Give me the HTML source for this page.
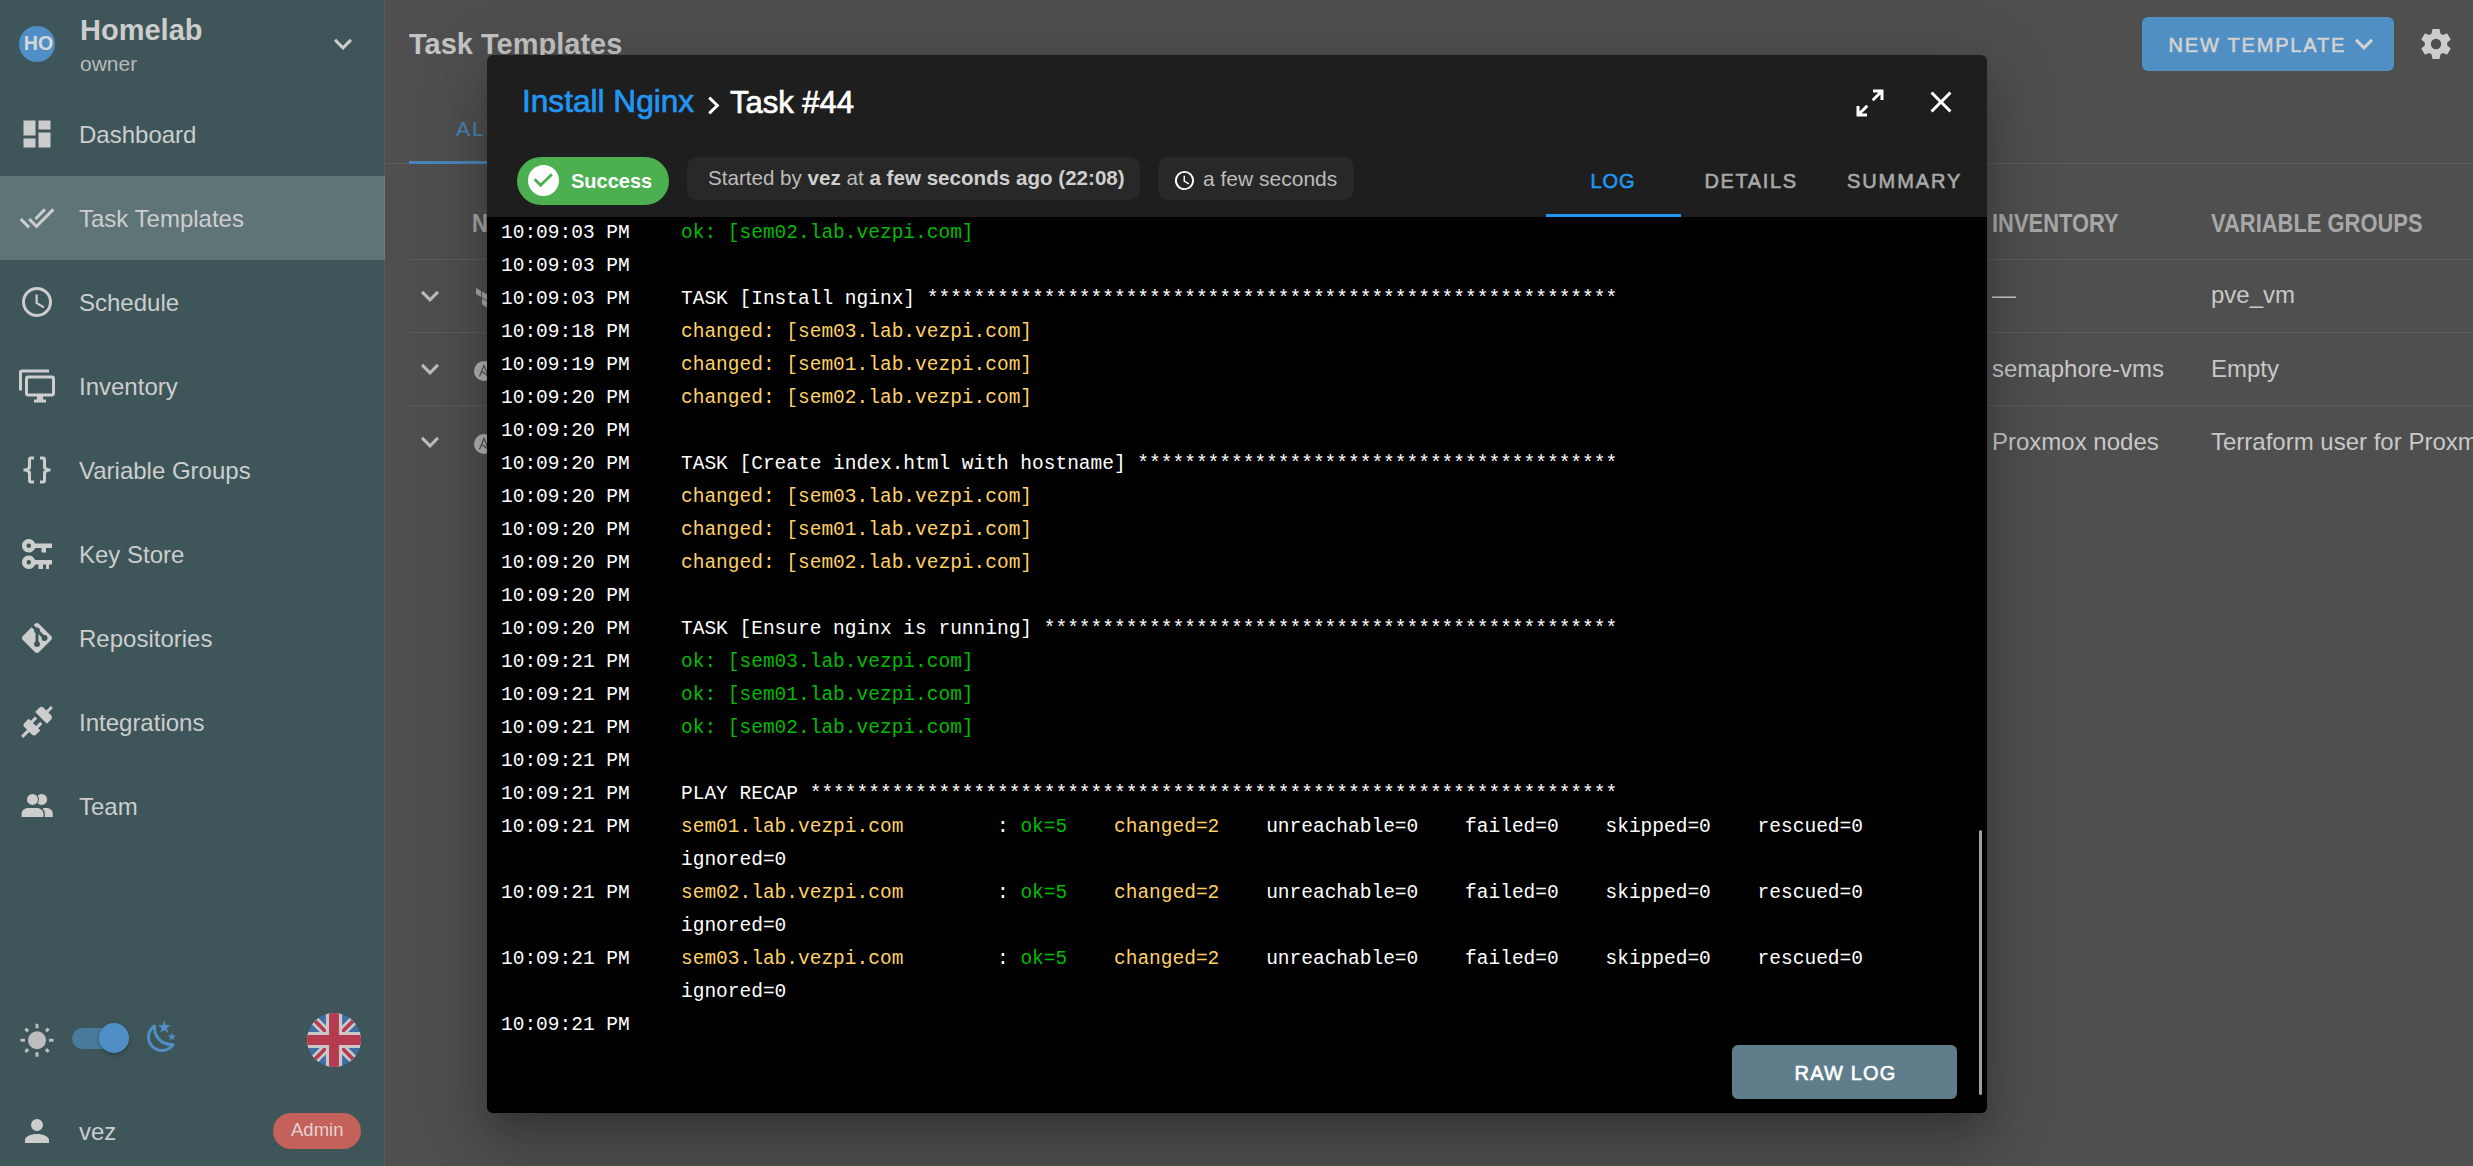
<!DOCTYPE html><html><head><meta charset="utf-8"><style>
html,body{margin:0;padding:0;width:2473px;height:1166px;overflow:hidden;background:#4f4f4f;font-family:"Liberation Sans",sans-serif;}
.t{position:absolute;white-space:pre;line-height:1;}
.i{position:absolute;display:block;}
.b{position:absolute;}
#side{position:absolute;left:0;top:0;width:385px;height:1166px;background:#3e5659;}
#dlg{position:absolute;left:487px;top:55px;width:1500px;height:1058px;background:#1e1e1e;border-radius:6px;overflow:hidden;
 box-shadow:0 16px 22px -10px rgba(0,0,0,.2),0 36px 57px 4px rgba(0,0,0,.14),0 13px 69px 12px rgba(0,0,0,.12);}
#log{position:absolute;left:0;top:162px;width:1500px;height:896px;background:#000;font-family:"Liberation Mono",monospace;font-size:19.5px;line-height:33px;color:#fff;}
.ln{position:absolute;left:14px;height:33px;white-space:pre;}
.ln .tm{position:absolute;left:0;top:0;}
.ln .ms{position:absolute;left:180px;top:0;}
.g{color:#00bb00}.y{color:#ffd166}
</style></head><body>
<div id="side">
<div class="b" style="left:19px;top:26px;width:36px;height:36px;border-radius:50%;background:#4f8fc5;"></div>
<div class="t" style="left:23.8px;top:34.41px;font-size:19.6px;color:#d8d8d8;font-weight:700;">HO</div>
<div class="t" style="left:80px;top:16.25px;font-size:29px;color:#cdcdcd;font-weight:700;">Homelab</div>
<div class="t" style="left:80px;top:53.22px;font-size:21px;color:#b9b9b9;">owner</div>
<svg class="i" style="left:325px;top:26px;width:36px;height:36px;" viewBox="0 0 24 24"><path fill="#cdcdcd" d="M7.41,8.58L12,13.17L16.59,8.58L18,10L12,16L6,10L7.41,8.58Z"/></svg>
<div class="b" style="left:0;top:176px;width:385px;height:84px;background:#5f7476;"></div>
<svg class="i" style="left:19px;top:116px;width:36px;height:36px;" viewBox="0 0 24 24"><path fill="#cdcdcd" d="M13,3V9H21V3M13,21H21V11H13M3,21H11V15H3M3,13H11V3H3V13Z"/></svg>
<div class="t" style="left:79px;top:122.68px;font-size:24px;color:#cdcdcd;">Dashboard</div>
<svg class="i" style="left:19px;top:200px;width:36px;height:36px;" viewBox="0 0 24 24"><path fill="#cdcdcd" d="M0.41,13.41L6,19L7.41,17.58L1.83,12M22.24,5.58L11.66,16.17L7.5,12L6.07,13.41L11.66,19L23.66,7M18,7L16.59,5.58L10.24,11.93L11.66,13.34L18,7Z"/></svg>
<div class="t" style="left:79px;top:206.68px;font-size:24px;color:#cdcdcd;">Task Templates</div>
<svg class="i" style="left:19px;top:284px;width:36px;height:36px;" viewBox="0 0 24 24"><path fill="#cdcdcd" d="M12,20A8,8 0 0,0 20,12A8,8 0 0,0 12,4A8,8 0 0,0 4,12A8,8 0 0,0 12,20M12,2A10,10 0 0,1 22,12A10,10 0 0,1 12,22C6.47,22 2,17.5 2,12A10,10 0 0,1 12,2M12.5,7V12.25L17,14.92L16.25,16.15L11,13V7H12.5Z"/></svg>
<div class="t" style="left:79px;top:290.68px;font-size:24px;color:#cdcdcd;">Schedule</div>
<svg class="i" style="left:19px;top:368px;width:36px;height:36px;" viewBox="0 0 24 24"><path fill="#cdcdcd" d="M22,17V7H6V17H22M22,5A2,2 0 0,1 24,7V17C24,18.11 23.1,19 22,19H16V21H18V23H10V21H12V19H6C4.89,19 4,18.11 4,17V7A2,2 0 0,1 6,5H22M2,3V15H0V3A2,2 0 0,1 2,1H20V3H2Z"/></svg>
<div class="t" style="left:79px;top:374.68px;font-size:24px;color:#cdcdcd;">Inventory</div>
<svg class="i" style="left:19px;top:452px;width:36px;height:36px;" viewBox="0 0 24 24"><path fill="#cdcdcd" d="M8,3A2,2 0 0,0 6,5V9A2,2 0 0,1 4,11H3V13H4A2,2 0 0,1 6,15V19A2,2 0 0,0 8,21H10V19H8V14A2,2 0 0,0 6,12A2,2 0 0,0 8,10V5H10V3M16,3A2,2 0 0,1 18,5V9A2,2 0 0,0 20,11H21V13H20A2,2 0 0,0 18,15V19A2,2 0 0,1 16,21H14V19H16V14A2,2 0 0,1 18,12A2,2 0 0,1 16,10V5H14V3H16Z"/></svg>
<div class="t" style="left:79px;top:458.68px;font-size:24px;color:#cdcdcd;">Variable Groups</div>
<svg class="i" style="left:19px;top:536px;width:36px;height:36px;" viewBox="0 0 24 24"><path fill="#cdcdcd" d="M6.5,2C8.46,2 10.13,3.25 10.74,5H22V8H18V11H15V8H10.74C10.13,9.75 8.46,11 6.5,11C4,11 2,9 2,6.5C2,4 4,2 6.5,2M6.5,5A1.5,1.5 0 0,0 5,6.5A1.5,1.5 0 0,0 6.5,8A1.5,1.5 0 0,0 8,6.5A1.5,1.5 0 0,0 6.5,5M6.5,13C8.46,13 10.13,14.25 10.74,16H22V19H20V22H18V19H16V22H13V19H10.74C10.13,20.75 8.46,22 6.5,22C4,22 2,20 2,17.5C2,15 4,13 6.5,13M6.5,16A1.5,1.5 0 0,0 5,17.5A1.5,1.5 0 0,0 6.5,19A1.5,1.5 0 0,0 8,17.5A1.5,1.5 0 0,0 6.5,16Z"/></svg>
<div class="t" style="left:79px;top:542.68px;font-size:24px;color:#cdcdcd;">Key Store</div>
<svg class="i" style="left:19px;top:620px;width:36px;height:36px;" viewBox="0 0 24 24"><path fill="#cdcdcd" d="M2.6,10.59L8.38,4.8L10.07,6.5C9.83,7.35 10.22,8.28 11,8.73V14.27C10.4,14.61 10,15.26 10,16A2,2 0 0,0 12,18A2,2 0 0,0 14,16C14,15.26 13.6,14.61 13,14.27V9.41L15.07,11.5C15,11.65 15,11.82 15,12A2,2 0 0,0 17,14A2,2 0 0,0 19,12A2,2 0 0,0 17,10C16.82,10 16.65,10 16.5,10.07L13.93,7.5C14.19,6.57 13.71,5.55 12.78,5.16C12.35,5 11.9,4.96 11.5,5.07L9.8,3.38L10.59,2.6C11.37,1.81 12.63,1.81 13.41,2.6L21.4,10.59C22.19,11.37 22.19,12.63 21.4,13.41L13.41,21.4C12.63,22.19 11.37,22.19 10.59,21.4L2.6,13.41C1.81,12.63 1.81,11.37 2.6,10.59Z"/></svg>
<div class="t" style="left:79px;top:626.68px;font-size:24px;color:#cdcdcd;">Repositories</div>
<svg class="i" style="left:19px;top:704px;width:36px;height:36px;" viewBox="0 0 24 24"><path fill="#cdcdcd" d="M21.4 7.5C22.2 8.3 22.2 9.6 21.4 10.3L18.6 13.1L10.8 5.3L13.6 2.5C14.4 1.7 15.7 1.7 16.4 2.5L18.2 4.3L21.2 1.3L22.6 2.7L19.6 5.7L21.4 7.5M15.6 13.3L14.2 11.9L11.4 14.7L9.3 12.6L12.1 9.8L10.7 8.4L7.9 11.2L6.4 9.8L3.6 12.6C2.8 13.4 2.8 14.7 3.6 15.4L5.4 17.2L1.4 21.2L2.8 22.6L6.8 18.6L8.6 20.4C9.4 21.2 10.7 21.2 11.4 20.4L14.2 17.6L12.8 16.2L15.6 13.3Z"/></svg>
<div class="t" style="left:79px;top:710.68px;font-size:24px;color:#cdcdcd;">Integrations</div>
<svg class="i" style="left:17px;top:788px;width:40px;height:36px" viewBox="17 788 40 36"><circle cx="41.6" cy="799.4" r="5.5" fill="#cdcdcd"/><path d="M43,807.9 H46.5 C50.2,807.9 52.8,810.4 52.8,813.6 V817 H43 Z" fill="#cdcdcd"/><circle cx="32.5" cy="799.4" r="5.5" fill="#cdcdcd" stroke="#3e5659" stroke-width="2" paint-order="stroke"/><path d="M21.6,817 V813.6 C21.6,810.4 24.6,807.9 28.5,807.9 H36.6 C40.5,807.9 43.5,810.4 43.5,813.6 V817 Z" fill="#cdcdcd" stroke="#3e5659" stroke-width="2.8" paint-order="stroke"/></svg>
<div class="t" style="left:79px;top:794.68px;font-size:24px;color:#cdcdcd;">Team</div>
<svg class="i" style="left:19px;top:1023px;width:36px;height:36px;" viewBox="0 0 24 24"><path fill="#bdbdbd" d="M3.55,18.54L4.96,19.95L6.76,18.16L5.34,16.74M11,22.45C11.32,22.45 13,22.45 13,22.45V19.5H11M12,5.5A6,6 0 0,0 6,11.5A6,6 0 0,0 12,17.5A6,6 0 0,0 18,11.5C18,8.18 15.31,5.5 12,5.5M20,12.5H23V10.5H20M17.24,18.16L19.04,19.95L20.45,18.54L18.66,16.74M20.45,4.46L19.04,3.05L17.24,4.84L18.66,6.26M13,0.55H11V3.5H13M4,10.5H1V12.5H4M6.76,4.84L4.96,3.05L3.55,4.46L5.34,6.26L6.76,4.84Z"/></svg>
<div class="b" style="left:72px;top:1028px;width:54px;height:21px;border-radius:11px;background:#4a7a9c;"></div>
<div class="b" style="left:99px;top:1023px;width:30px;height:30px;border-radius:50%;background:#4f8fc5;box-shadow:0 2px 4px rgba(0,0,0,.25);"></div>
<svg class="i" style="left:144px;top:1019px;width:36px;height:36px;" viewBox="0 0 24 24"><path fill="#4f8fc5" d="M17.75,4.09L15.22,6.03L16.13,9.09L13.5,7.28L10.87,9.09L11.78,6.03L9.25,4.09L12.44,4L13.5,1L14.56,4L17.75,4.09M21.25,11L19.61,12.25L20.2,14.23L18.5,13.06L16.8,14.23L17.39,12.25L15.75,11L17.81,10.95L18.5,9L19.19,10.95L21.25,11M18.97,15.95C19.8,15.87 20.69,17.05 20.16,17.8C19.84,18.25 19.5,18.67 19.08,19.07C15.17,23 8.84,23 4.94,19.07C1.03,15.17 1.03,8.83 4.94,4.93C5.34,4.530 5.76,4.17 6.21,3.85C6.96,3.32 8.14,4.21 8.06,5.04C7.79,7.9 8.75,10.87 10.950,13.06C13.14,15.26 16.1,16.22 18.97,15.95M17.33,17.97C14.5,17.81 11.7,16.64 9.53,14.5C7.36,12.31 6.2,9.5 6.04,6.68C3.23,9.82 3.34,14.64 6.35,17.66C9.37,20.67 14.19,20.78 17.33,17.970Z"/></svg>
<svg class="i" style="left:307px;top:1013px;width:54px;height:54px" viewBox="0 0 60 60"><defs><clipPath id="fc"><circle cx="30" cy="30" r="30"/></clipPath></defs><g clip-path="url(#fc)">
<rect width="60" height="60" fill="#3f6ea6"/>
<path d="M0,0 L60,60 M60,0 L0,60" stroke="#c8c8c8" stroke-width="10"/>
<path d="M0,0 L60,60 M60,0 L0,60" stroke="#b53a50" stroke-width="4"/>
<path d="M30,0 V60 M0,30 H60" stroke="#c8c8c8" stroke-width="18"/>
<path d="M30,0 V60 M0,30 H60" stroke="#b53a50" stroke-width="11"/>
</g></svg>
<svg class="i" style="left:19px;top:1113px;width:36px;height:36px;" viewBox="0 0 24 24"><path fill="#cdcdcd" d="M12,4A4,4 0 0,1 16,8A4,4 0 0,1 12,12A4,4 0 0,1 8,8A4,4 0 0,1 12,4M12,14C16.42,14 20,15.79 20,18V20H4V18C4,15.790 7.58,14 12,14Z"/></svg>
<div class="t" style="left:79px;top:1119.68px;font-size:24px;color:#cdcdcd;">vez</div>
<div class="b" style="left:273px;top:1113px;width:88px;height:36px;border-radius:18px;background:#c3615a;"></div>
<div class="t" style="left:291px;top:1121.34px;font-size:18.5px;color:#e3d3d3;">Admin</div>
<div class="b" style="left:384px;top:0;width:1px;height:1166px;background:rgba(255,255,255,0.07);"></div>
</div>
<div class="t" style="left:409px;top:30.45px;font-size:29px;color:#c4c4c4;font-weight:700;">Task Templates</div>
<div class="t" style="left:456px;top:118.22px;font-size:21px;color:#4a86b9;letter-spacing:2px;">ALL</div>
<div class="b" style="left:385px;top:163px;width:2088px;height:1px;background:#5c5c5c;"></div>
<div class="b" style="left:409px;top:161px;width:120px;height:3px;background:#4a86b9;"></div>
<div class="b" style="left:409px;top:259px;width:2064px;height:1px;background:#5c5c5c;"></div>
<div class="b" style="left:409px;top:332px;width:2064px;height:1px;background:#5c5c5c;"></div>
<div class="b" style="left:409px;top:405px;width:2064px;height:1px;background:#5c5c5c;"></div>
<div class="t" style="left:472px;top:211.34px;font-size:25px;color:#a8a8a8;font-weight:700;transform:scaleX(0.877);transform-origin:0 0;">N</div>
<div class="t" style="left:1992px;top:211.34px;font-size:25px;color:#a8a8a8;font-weight:700;transform:scaleX(0.877);transform-origin:0 0;">INVENTORY</div>
<div class="t" style="left:2211px;top:211.34px;font-size:25px;color:#a8a8a8;font-weight:700;transform:scaleX(0.877);transform-origin:0 0;">VARIABLE GROUPS</div>
<svg class="i" style="left:412px;top:278px;width:36px;height:36px;" viewBox="0 0 24 24"><path fill="#bdbdbd" d="M7.41,8.58L12,13.17L16.59,8.58L18,10L12,16L6,10L7.41,8.58Z"/></svg>
<svg class="i" style="left:412px;top:351px;width:36px;height:36px;" viewBox="0 0 24 24"><path fill="#bdbdbd" d="M7.41,8.58L12,13.17L16.59,8.58L18,10L12,16L6,10L7.41,8.58Z"/></svg>
<svg class="i" style="left:412px;top:424px;width:36px;height:36px;" viewBox="0 0 24 24"><path fill="#bdbdbd" d="M7.41,8.58L12,13.17L16.59,8.58L18,10L12,16L6,10L7.41,8.58Z"/></svg>
<svg class="i" style="left:474px;top:287px;width:22px;height:22px" viewBox="0 0 22 22"><g fill="#a9a9a9"><polygon points="2,1 7,4 7,10 2,7"/><polygon points="8,4.5 13,7.5 13,13.5 8,10.5"/><polygon points="14,7.5 19,4.5 19,10.5 14,13.5"/><polygon points="8,11.5 13,14.5 13,20.5 8,17.5"/></g></svg>
<svg class="i" style="left:474px;top:361px;width:20px;height:20px" viewBox="0 0 20 20"><circle cx="10" cy="10" r="10" fill="#b5b5b5"/><path d="M5.5,15.5 L10,4.5 L14.5,15.5 L8,10.5" fill="none" stroke="#4a4a4a" stroke-width="1.1"/></svg>
<svg class="i" style="left:474px;top:434px;width:20px;height:20px" viewBox="0 0 20 20"><circle cx="10" cy="10" r="10" fill="#b5b5b5"/><path d="M5.5,15.5 L10,4.5 L14.5,15.5 L8,10.5" fill="none" stroke="#4a4a4a" stroke-width="1.1"/></svg>
<div class="t" style="left:1992px;top:283.18px;font-size:24px;color:#c8c8c8;">—</div>
<div class="t" style="left:2211px;top:283.18px;font-size:24px;color:#c8c8c8;">pve_vm</div>
<div class="t" style="left:1992px;top:356.68px;font-size:24px;color:#c8c8c8;">semaphore-vms</div>
<div class="t" style="left:2211px;top:356.68px;font-size:24px;color:#c8c8c8;">Empty</div>
<div class="t" style="left:1992px;top:429.68px;font-size:24px;color:#c8c8c8;">Proxmox nodes</div>
<div class="t" style="left:2211px;top:429.68px;font-size:24px;color:#c8c8c8;">Terraform user for Proxmox</div>
<div class="b" style="left:2142px;top:17px;width:252px;height:54px;border-radius:6px;background:#508fc4;"></div>
<div class="t" style="left:2168.5px;top:35.07px;font-size:20px;color:#d2d2d2;letter-spacing:1.8px;-webkit-text-stroke:0.6px #d2d2d2;">NEW TEMPLATE</div>
<svg class="i" style="left:2346px;top:26.1px;width:36px;height:36px;" viewBox="0 0 24 24"><path fill="#d2d2d2" d="M7.41,8.58L12,13.17L16.59,8.58L18,10L12,16L6,10L7.41,8.58Z"/></svg>
<svg class="i" style="left:2418px;top:26px;width:36px;height:36px;" viewBox="0 0 24 24"><path fill="#cdcdcd" d="M12,15.5A3.5,3.5 0 0,1 8.5,12A3.5,3.5 0 0,1 12,8.5A3.5,3.5 0 0,1 15.5,12A3.5,3.5 0 0,1 12,15.5M19.43,12.97C19.47,12.65 19.5,12.33 19.5,12C19.5,11.67 19.47,11.34 19.43,11L21.54,9.37C21.73,9.22 21.78,8.95 21.66,8.73L19.66,5.27C19.54,5.05 19.27,4.96 19.05,5.05L16.56,6.05C16.04,5.66 15.5,5.32 14.87,5.07L14.5,2.42C14.46,2.18 14.25,2 14,2H10C9.75,2 9.54,2.18 9.5,2.42L9.13,5.07C8.5,5.32 7.96,5.66 7.44,6.05L4.95,5.05C4.73,4.96 4.46,5.050 4.34,5.27L2.34,8.73C2.21,8.95 2.27,9.22 2.46,9.37L4.57,11C4.53,11.34 4.5,11.67 4.5,12C4.5,12.33 4.53,12.65 4.57,12.97L2.46,14.63C2.27,14.78 2.21,15.05 2.34,15.27L4.34,18.73C4.46,18.95 4.73,19.03 4.95,18.95L7.44,17.94C7.96,18.34 8.5,18.68 9.13,18.93L9.5,21.58C9.54,21.82 9.75,22 10,22H14C14.25,22 14.46,21.82 14.5,21.58L14.87,18.93C15.5,18.67 16.04,18.34 16.56,17.94L19.05,18.95C19.27,19.03 19.54,18.95 19.66,18.73L21.66,15.27C21.78,15.05 21.73,14.78 21.54,14.63L19.43,12.97Z"/></svg>
<div id="dlg">
<div class="t" style="left:35px;top:31.25px;font-size:31.6px;color:#2196f3;-webkit-text-stroke:0.7px #2196f3;">Install Nginx</div>
<svg class="i" style="left:203px;top:30px;width:40px;height:40px" viewBox="690 85 40 40"><path d="M709.2,97.6 L717.4,105.5 L709.2,113.4" fill="none" stroke="#fff" stroke-width="2.9"/></svg>
<div class="t" style="left:243px;top:31.76px;font-size:31px;color:#ffffff;-webkit-text-stroke:0.7px #fff;">Task #44</div>
<svg class="i" style="left:1365px;top:30px;width:36px;height:36px;" viewBox="0 0 24 24"><path fill="#ffffff" d="M10,21V19H6.41L10.91,14.5L9.5,13.09L5,17.59V14H3V21H10M14.5,10.91L19,6.41V10H21V3H14V5H17.59L13.09,9.5L14.5,10.91Z"/></svg>
<svg class="i" style="left:1436px;top:29px;width:36px;height:36px;" viewBox="0 0 24 24"><path fill="#ffffff" d="M19,6.41L17.59,5L12,10.59L6.41,5L5,6.41L10.59,12L5,17.59L6.41,19L12,13.41L17.59,19L19,17.59L13.41,12L19,6.41Z"/></svg>
<div class="b" style="left:30px;top:102px;width:152px;height:48px;border-radius:24px;background:#4caf50;"></div>
<div class="b" style="left:41px;top:110px;width:31px;height:31px;border-radius:50%;background:#fff;"></div>
<svg class="i" style="left:33px;top:105px;width:50px;height:40px" viewBox="520 160 50 40"><path d="M534.6,179.2 L540.6,185.2 L551.9,174.2" fill="none" stroke="#4caf50" stroke-width="2.8"/></svg>
<div class="t" style="left:84px;top:115.67px;font-size:20px;color:#ffffff;font-weight:700;">Success</div>
<div class="b" style="left:200px;top:102px;width:453px;height:43px;border-radius:10px;background:#282828;"></div>
<div class="t" style="left:221px;top:113.06px;font-size:20.6px;color:#bcbcbc;">Started by <b style="color:#cfcfcf">vez</b> at <b style="color:#cfcfcf">a few seconds ago (22:08)</b></div>
<div class="b" style="left:671px;top:102px;width:196px;height:43px;border-radius:10px;background:#282828;"></div>
<svg class="i" style="left:686.0999999999999px;top:114px;width:23px;height:23px;" viewBox="0 0 24 24"><path fill="#ffffff" d="M12,20A8,8 0 0,0 20,12A8,8 0 0,0 12,4A8,8 0 0,0 4,12A8,8 0 0,0 12,20M12,2A10,10 0 0,1 22,12A10,10 0 0,1 12,22C6.47,22 2,17.5 2,12A10,10 0 0,1 12,2M12.5,7V12.25L17,14.92L16.25,16.15L11,13V7H12.5Z"/></svg>
<div class="t" style="left:716px;top:112.72px;font-size:21px;color:#bcbcbc;">a few seconds</div>
<div class="t" style="left:1103.5px;top:116.07px;font-size:20px;color:#2196f3;letter-spacing:0.9px;-webkit-text-stroke:0.6px #2196f3;">LOG</div>
<div class="t" style="left:1217.5px;top:116.07px;font-size:20px;color:#a9a9a9;letter-spacing:1.6px;-webkit-text-stroke:0.6px #a9a9a9;">DETAILS</div>
<div class="t" style="left:1360px;top:116.07px;font-size:20px;color:#a9a9a9;letter-spacing:1.9px;-webkit-text-stroke:0.6px #a9a9a9;">SUMMARY</div>
<div class="b" style="left:1059px;top:159px;width:135px;height:3px;background:#2196f3;"></div>
<div id="log">
<div class="ln" style="top:0px"><span class="tm">10:09:03 PM</span><span class="ms"><span class="g">ok: [sem02.lab.vezpi.com]</span></span></div>
<div class="ln" style="top:33px"><span class="tm">10:09:03 PM</span><span class="ms"></span></div>
<div class="ln" style="top:66px"><span class="tm">10:09:03 PM</span><span class="ms">TASK [Install nginx] ***********************************************************</span></div>
<div class="ln" style="top:99px"><span class="tm">10:09:18 PM</span><span class="ms"><span class="y">changed: [sem03.lab.vezpi.com]</span></span></div>
<div class="ln" style="top:132px"><span class="tm">10:09:19 PM</span><span class="ms"><span class="y">changed: [sem01.lab.vezpi.com]</span></span></div>
<div class="ln" style="top:165px"><span class="tm">10:09:20 PM</span><span class="ms"><span class="y">changed: [sem02.lab.vezpi.com]</span></span></div>
<div class="ln" style="top:198px"><span class="tm">10:09:20 PM</span><span class="ms"></span></div>
<div class="ln" style="top:231px"><span class="tm">10:09:20 PM</span><span class="ms">TASK [Create index.html with hostname] *****************************************</span></div>
<div class="ln" style="top:264px"><span class="tm">10:09:20 PM</span><span class="ms"><span class="y">changed: [sem03.lab.vezpi.com]</span></span></div>
<div class="ln" style="top:297px"><span class="tm">10:09:20 PM</span><span class="ms"><span class="y">changed: [sem01.lab.vezpi.com]</span></span></div>
<div class="ln" style="top:330px"><span class="tm">10:09:20 PM</span><span class="ms"><span class="y">changed: [sem02.lab.vezpi.com]</span></span></div>
<div class="ln" style="top:363px"><span class="tm">10:09:20 PM</span><span class="ms"></span></div>
<div class="ln" style="top:396px"><span class="tm">10:09:20 PM</span><span class="ms">TASK [Ensure nginx is running] *************************************************</span></div>
<div class="ln" style="top:429px"><span class="tm">10:09:21 PM</span><span class="ms"><span class="g">ok: [sem03.lab.vezpi.com]</span></span></div>
<div class="ln" style="top:462px"><span class="tm">10:09:21 PM</span><span class="ms"><span class="g">ok: [sem01.lab.vezpi.com]</span></span></div>
<div class="ln" style="top:495px"><span class="tm">10:09:21 PM</span><span class="ms"><span class="g">ok: [sem02.lab.vezpi.com]</span></span></div>
<div class="ln" style="top:528px"><span class="tm">10:09:21 PM</span><span class="ms"></span></div>
<div class="ln" style="top:561px"><span class="tm">10:09:21 PM</span><span class="ms">PLAY RECAP *********************************************************************</span></div>
<div class="ln" style="top:594px"><span class="tm">10:09:21 PM</span><span class="ms"><span class="y">sem01.lab.vezpi.com</span>        : <span class="g">ok=5</span>    <span class="y">changed=2</span>    unreachable=0    failed=0    skipped=0    rescued=0</span></div>
<div class="ln" style="top:627px"><span class="tm"></span><span class="ms">ignored=0</span></div>
<div class="ln" style="top:660px"><span class="tm">10:09:21 PM</span><span class="ms"><span class="y">sem02.lab.vezpi.com</span>        : <span class="g">ok=5</span>    <span class="y">changed=2</span>    unreachable=0    failed=0    skipped=0    rescued=0</span></div>
<div class="ln" style="top:693px"><span class="tm"></span><span class="ms">ignored=0</span></div>
<div class="ln" style="top:726px"><span class="tm">10:09:21 PM</span><span class="ms"><span class="y">sem03.lab.vezpi.com</span>        : <span class="g">ok=5</span>    <span class="y">changed=2</span>    unreachable=0    failed=0    skipped=0    rescued=0</span></div>
<div class="ln" style="top:759px"><span class="tm"></span><span class="ms">ignored=0</span></div>
<div class="ln" style="top:792px"><span class="tm">10:09:21 PM</span><span class="ms"></span></div>
<div class="b" style="left:1492px;top:613px;width:3px;height:265px;border-radius:2px;background:#a0a0a0;"></div>
<div class="b" style="left:1245px;top:828px;width:225px;height:54px;border-radius:6px;background:#607d8b;"></div>
<div class="t" style="left:1307.5px;top:846.07px;font-size:20px;color:#ffffff;letter-spacing:1.2px;font-family:'Liberation Sans',sans-serif;-webkit-text-stroke:0.6px #fff;">RAW LOG</div>
</div>
</div>
</body></html>
